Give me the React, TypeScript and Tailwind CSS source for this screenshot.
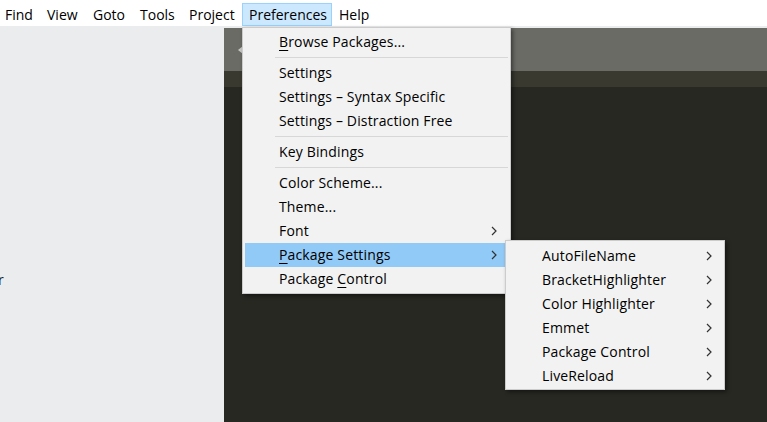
import React from "react";

const font = { fontFamily: '"Open Sans", "Noto Sans", sans-serif' };

function Chevron() {
  return (
    <svg width="6" height="10" viewBox="0 0 6 10" className="shrink-0">
      <polyline points="1,1 5,5 1,9" fill="none" stroke="#333" strokeWidth="1.2" />
    </svg>
  );
}

function Item({
  children,
  arrow,
  active,
  pr = "pr-[11px]",
}: {
  children: React.ReactNode;
  arrow?: boolean;
  active?: boolean;
  pr?: string;
}) {
  return (
    <div
      className={`mx-[2px] h-[24px] flex items-center justify-between pl-[34px] ${pr} text-[14px] tracking-[0.15px] text-black ${
        active ? "bg-[#91c9f7]" : ""
      }`}
    >
      <span className="leading-none whitespace-nowrap">{children}</span>
      {arrow && <Chevron />}
    </div>
  );
}

function Sep() {
  return <div className="h-[7px] flex items-center pl-[32px] pr-[2px]"><div className="h-px w-full bg-[#d7d7d7]" /></div>;
}

function U({ children }: { children: React.ReactNode }) {
  return <span className="underline underline-offset-[3px] decoration-1">{children}</span>;
}

export default function App() {
  const menus: [string, string][] = [
    ["Find", "w-[42px]"],
    ["View", "w-[46px]"],
    ["Goto", "w-[47px]"],
    ["Tools", "w-[49px]"],
    ["Project", "w-[60px]"],
    ["Preferences", "w-[90px]"],
    ["Help", "w-[46px]"],
  ];
  return (
    <div className="relative w-[767px] h-[422px] overflow-hidden flex flex-col bg-white" style={font}>
      {/* menu bar */}
      <div className="h-[26px] flex items-start bg-white -ml-[2px]">
        {menus.map(([m, w]) => (
          <div
            key={m}
            className={`${w} mt-[3px] h-[23px] flex items-center pl-[6px] border text-[14px] text-black ${
              m === "Preferences" ? "bg-[#cce8ff] border-[#99d1ff]" : "border-transparent"
            }`}
          >
            <span className="leading-none">{m}</span>
          </div>
        ))}
      </div>

      {/* body */}
      <div className="flex-1 flex">
        <div className="w-[224px] bg-[#ebecee] pt-[245px]">
          <div className="-ml-[2px] text-[14px] text-[#222] leading-[18px]">r</div>
        </div>
        <div className="flex-1 flex flex-col bg-[#ebecee]">
          <div className="h-[2px]" />
          <div className="h-[43px] bg-[#6b6b66] flex items-center pl-[14px]">
            <svg width="5" height="8" viewBox="0 0 5 8">
              <polygon points="5,0 0,4 5,8" fill="#c8c8c4" />
            </svg>
          </div>
          <div className="h-[16px] bg-[#393930]" />
          <div className="flex-1 bg-[#272822]" />
        </div>
      </div>

      {/* Preferences dropdown */}
      <div className="absolute left-[242px] top-[27px] w-[269px] border border-[#cccccc] bg-[#f2f2f2] pt-[2px] pb-[2px] shadow-[2px_2px_4px_rgba(0,0,0,0.45)]">
        <Item>
          <U>B</U>rowse Packages...
        </Item>
        <Sep />
        <Item>Settings</Item>
        <Item>Settings – Syntax Specific</Item>
        <Item>Settings – Distraction Free</Item>
        <Sep />
        <Item>Key Bindings</Item>
        <Sep />
        <Item>Color Scheme...</Item>
        <Item>Theme...</Item>
        <Item arrow>Font</Item>
        <Item arrow active>
          <U>P</U>ackage Settings
        </Item>
        <Item>
          Package <U>C</U>ontrol
        </Item>
      </div>

      {/* Package Settings submenu */}
      <div className="absolute left-[505px] top-[240px] w-[220px] border border-[#cccccc] bg-[#f2f2f2] pt-[3px] pb-[1px] shadow-[2px_2px_4px_rgba(0,0,0,0.45)]">
        {["AutoFileName", "BracketHighlighter", "Color Highlighter", "Emmet", "Package Control", "LiveReload"].map((t) => (
          <Item key={t} arrow pr="pr-[10px]">
            {t}
          </Item>
        ))}
      </div>
    </div>
  );
}
